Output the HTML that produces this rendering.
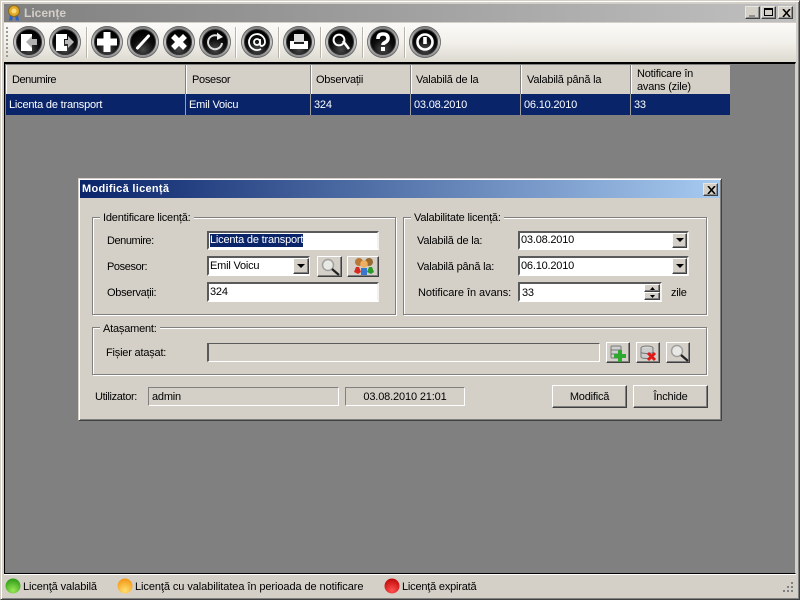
<!DOCTYPE html>
<html><head><meta charset="utf-8"><title>Licențe</title>
<style>
html,body{margin:0;padding:0;background:#d4d0c8}
#r{position:relative;width:800px;height:600px;overflow:hidden;background:#d4d0c8;font:11px/13px "Liberation Sans","DejaVu Sans",sans-serif;color:#000;letter-spacing:-.2px}
#r div,#r svg,#r span.t{position:absolute}
.t{white-space:nowrap}
.in{box-sizing:border-box;background:#fff;border:2px solid;border-color:#5a5a5a #f4f2ee #fff #5a5a5a;padding:1px 0 0 1px;white-space:nowrap}
.ro{box-sizing:border-box;border:1px solid;border-color:#808080 #fff #fff #808080;white-space:nowrap}
.btn{box-sizing:border-box;background:#d4d0c8;border:1px solid;border-color:#fff #404040 #404040 #fff;box-shadow:inset -1px -1px 0 #808080}
.grp{box-sizing:border-box;border:1px solid #808080;box-shadow:1px 1px 0 #fff,inset 1px 1px 0 #fff}
.lg{background:#d4d0c8;padding:0 3px;white-space:nowrap;height:13px}
.hd{box-sizing:border-box;top:65px;height:29px;background:#d4d0c8;border-right:1px solid #808080;box-shadow:inset 1px 0 0 #fff}
.cl{box-sizing:border-box;top:94px;height:21px;background:#0a246a;color:#fff;border-right:1px solid #a0a0a0;padding:5px 0 0 3px;white-space:nowrap}
.sep{top:27px;width:2px;height:31px;background:linear-gradient(90deg,#b8b4ac 50%,#fff 50%)}
.cap{box-sizing:border-box;background:#d4d0c8;border:1px solid;border-color:#e8e6e0 #404040 #404040 #e8e6e0;width:15px;height:13px;top:6px;box-shadow:inset -1px -1px 0 #909090}
</style></head><body><div id="r">
<!-- window frame -->
<div style="left:0;top:0;width:800px;height:600px;box-sizing:border-box;border:1px solid #d4d0c8;border-right-color:#404040;border-bottom-color:#404040;box-shadow:inset 1px 1px 0 #fff,inset -1px -1px 0 #808080"></div>
<div style="left:4px;top:4px;width:792px;height:18px;background:linear-gradient(90deg,#808080,#c0c0c0)"></div>
<svg style="left:7px;top:5px" width="14" height="17" viewBox="0 0 14 17"><path d="M3 10l-1 6 2-1 1 1 1-5zM8 10l1 6 1-1 2 1-1-6z" fill="#2a62c8"/><circle cx="7" cy="6" r="5.5" fill="#e2a82a" stroke="#8a6a18"/><circle cx="7" cy="6" r="2.5" fill="#f6dc7a"/></svg>
<span class="t" style="left:24px;top:7px;font-weight:bold;color:#d4d0c8;font-size:12px;letter-spacing:0">Licențe</span>
<div class="cap" style="left:745px"><div style="left:3px;top:8px;width:6px;height:2px;background:#909090"></div></div>
<div class="cap" style="left:761px"><div style="left:2px;top:1px;width:9px;height:8px;box-sizing:border-box;border:1px solid #000;border-top-width:2px"></div></div>
<div class="cap" style="left:778px"><svg style="left:3px;top:2px" width="9" height="8" viewBox="0 0 9 8"><path d="M1 0l7 8M8 0L1 8" stroke="#000" stroke-width="1.6"/></svg></div>
<!-- toolbar -->
<div style="left:4px;top:23px;width:792px;height:39px;background:linear-gradient(180deg,#fbfaf8,#f2f0ea 50%,#dcd9d0)"></div>
<svg style="left:6px;top:26px" width="3" height="34"><g fill="#9a9a94"><rect y="1" width="2" height="2"/><rect y="5" width="2" height="2"/><rect y="9" width="2" height="2"/><rect y="13" width="2" height="2"/><rect y="17" width="2" height="2"/><rect y="21" width="2" height="2"/><rect y="25" width="2" height="2"/><rect y="29" width="2" height="2"/></g></svg>
<div class="sep" style="left:86px"></div><div class="sep" style="left:235px"></div><div class="sep" style="left:278px"></div><div class="sep" style="left:320px"></div><div class="sep" style="left:362px"></div><div class="sep" style="left:404px"></div>
<svg style="left:0;top:0" width="450" height="62" viewBox="0 0 450 62">
<defs>
<linearGradient id="ring" x1="0" y1="0" x2="0" y2="1"><stop offset="0" stop-color="#777"/><stop offset=".5" stop-color="#c4c4c4"/><stop offset="1" stop-color="#8a8a8a"/></linearGradient>
<radialGradient id="blk" cx=".5" cy=".8" r=".7"><stop offset="0" stop-color="#4a4a4a"/><stop offset=".6" stop-color="#0c0c0c"/><stop offset="1" stop-color="#000"/></radialGradient>
<g id="b"><circle r="16" fill="url(#ring)"/><circle r="15.500" fill="none" stroke="#666" stroke-width=".8"/><circle r="12.500" fill="url(#blk)" stroke="#333"/></g>
</defs>
<g transform="translate(29,42)"><use href="#b"/><path d="M-8-8H3V-4L-2 0 3 4V9H-8z" fill="#fff"/><path d="M-3 0L3-6V-3H8V3H3V6z" fill="#b0b0b0"/></g>
<g transform="translate(65,42)"><use href="#b"/><path d="M-9-8H2V-3H-1V4H2V9H-9z" fill="#fff"/><path d="M0-2H3V-6L9 0 3 6V2H0z" fill="#b8b8b8"/></g>
<g transform="translate(107,42)"><use href="#b"/><path d="M-3.500-10H3.500V-3.500H10V3.500H3.500V10H-3.500V3.500H-10V-3.500H-3.500z" fill="#fff"/></g>
<g transform="translate(143,42)"><use href="#b"/><path d="M-5.500 6L5.500-6" stroke="#fff" stroke-width="3" stroke-linecap="round"/></g>
<g transform="translate(179,42)"><use href="#b"/><path d="M-6-6L6 6M6-6L-6 6" stroke="#fff" stroke-width="5.500"/></g>
<g transform="translate(215,42)"><use href="#b"/><path d="M7 1A7 7 0 1 1 2-6.500" fill="none" stroke="#ddd" stroke-width="2"/><path d="M2-9.500L8-5 2-2z" fill="#eee"/></g>
<g transform="translate(257,42)"><use href="#b"/><circle cx="0" cy="0" r="3" fill="none" stroke="#fff" stroke-width="1.800"/><path d="M3-3V2Q3 4 5 4 8 3 8 0A8 8 0 1 0 4 7" fill="none" stroke="#fff" stroke-width="1.800"/></g>
<g transform="translate(299,42)"><use href="#b"/><path d="M-5-8H5V0H-5z" fill="#ddd"/><path d="M-9-1H-5V2H5V-1H9V7H-9z" fill="#fff"/></g>
<g transform="translate(341,42)"><use href="#b"/><circle cx="-2" cy="-2" r="5.400" fill="none" stroke="#fff" stroke-width="2"/><path d="M2-1L8 7" stroke="#fff" stroke-width="2.600"/></g>
<g transform="translate(383,42)"><use href="#b"/><path d="M-5-3Q-5-8 0-8 5-8 5-3.500 5-1 2 0.500 0 1.500 0 3" fill="none" stroke="#fff" stroke-width="3.600"/><rect x="-2" y="5" width="4" height="4" fill="#fff"/></g>
<g transform="translate(425,42)"><use href="#b"/><circle r="7.500" fill="none" stroke="#fff" stroke-width="2.600"/><rect x="-1.800" y="-5" width="3.600" height="7" fill="#fff"/></g>
</svg>
<!-- MDI area -->
<div style="left:4px;top:62px;width:792px;height:512px;box-sizing:border-box;background:#808080;border:2px solid #000;border-right:1px solid #d4d0c8;border-left-width:1px;border-bottom-width:1px"></div>
<!-- table -->
<div class="hd" style="left:6px;width:180px"><span class="t" style="left:6px;top:9px;letter-spacing:-.45px">Denumire</span></div>
<div class="hd" style="left:186px;width:125px"><span class="t" style="left:6px;top:9px;letter-spacing:-.3px">Posesor</span></div>
<div class="hd" style="left:311px;width:100px"><span class="t" style="left:5px;top:9px;letter-spacing:-.25px">Observații</span></div>
<div class="hd" style="left:411px;width:110px"><span class="t" style="left:5px;top:9px">Valabilă de la</span></div>
<div class="hd" style="left:521px;width:110px"><span class="t" style="left:6px;top:9px">Valabilă până la</span></div>
<div class="hd" style="left:631px;width:99px;border-right:0"><span class="t" style="left:6px;top:3px">Notificare în<br>avans (zile)</span></div>
<div class="cl" style="left:6px;width:180px">Licenta de transport</div>
<div class="cl" style="left:186px;width:125px">Emil Voicu</div>
<div class="cl" style="left:311px;width:100px">324</div>
<div class="cl" style="left:411px;width:110px">03.08.2010</div>
<div class="cl" style="left:521px;width:110px">06.10.2010</div>
<div class="cl" style="left:631px;width:99px;border-right:0">33</div>
<!-- dialog -->
<div style="left:78px;top:178px;width:644px;height:243px;box-sizing:border-box;background:#d4d0c8;border:1px solid;border-color:#d4d0c8 #404040 #404040 #d4d0c8;box-shadow:inset 1px 1px 0 #fff,inset -1px -1px 0 #808080"></div>
<div style="left:80px;top:180px;width:640px;height:18px;background:linear-gradient(90deg,#0a246a,#a6caf0)"></div>
<span class="t" style="left:82px;top:183px;font-weight:bold;color:#fff;letter-spacing:.3px">Modifică licență</span>
<div class="cap" style="left:703px;top:183px"><svg style="left:3px;top:2px" width="9" height="8" viewBox="0 0 9 8"><path d="M1 0l7 8M8 0L1 8" stroke="#000" stroke-width="1.600"/></svg></div>
<!-- group 1 -->
<div class="grp" style="left:92px;top:217px;width:304px;height:98px"></div>
<span class="t lg" style="left:100px;top:212px">Identificare licență:</span>
<span class="t" style="left:107px;top:235px;letter-spacing:-.45px">Denumire:</span>
<span class="t" style="left:107px;top:261px;letter-spacing:-.4px">Posesor:</span>
<span class="t" style="left:107px;top:287px;letter-spacing:-.3px">Observații:</span>
<div class="in" style="left:207px;top:231px;width:172px;height:19px"><span style="background:#0a246a;color:#fff;display:inline-block;line-height:13px">Licenta de transport</span></div>
<div class="in" style="left:207px;top:256px;width:103px;height:20px;padding-top:2px">Emil Voicu</div>
<div class="btn" style="left:293px;top:258px;width:16px;height:16px"><svg style="left:3px;top:5px" width="8" height="4"><path d="M0 0h8L4 4z"/></svg></div>
<div class="btn" style="left:317px;top:256px;width:25px;height:21px"><svg style="left:3px;top:1px" width="19" height="18" viewBox="0 0 19 18"><circle cx="7" cy="7" r="5.500" fill="#e8e8e4" stroke="#a0a0a0" stroke-width="1.500"/><path d="M11 11l7 6" stroke="#222" stroke-width="2.200"/></svg></div>
<div class="btn" style="left:347px;top:256px;width:32px;height:21px"><svg style="left:5px;top:0" width="22" height="19" viewBox="0 0 22 19"><circle cx="6" cy="5" r="4" fill="#b87838"/><circle cx="16" cy="5" r="4" fill="#9a6a30"/><circle cx="11" cy="7" r="3.800" fill="#eeb060"/><path d="M1 15l2-5h3l2 5-3 2z" fill="#d82820"/><path d="M14 15l2-5h3l2 5-3 2z" fill="#2a9a2a"/><path d="M8 11h6v7H8z" fill="#3a78d0"/></svg></div>
<div class="in" style="left:207px;top:282px;width:172px;height:20px;padding-top:2px">324</div>
<!-- group 2 -->
<div class="grp" style="left:403px;top:217px;width:304px;height:98px"></div>
<span class="t lg" style="left:411px;top:212px">Valabilitate licență:</span>
<span class="t" style="left:417px;top:235px">Valabilă de la:</span>
<span class="t" style="left:417px;top:261px">Valabilă până la:</span>
<span class="t" style="left:418px;top:287px;letter-spacing:-.05px">Notificare în avans:</span>
<div class="in" style="left:518px;top:231px;width:171px;height:19px;padding-top:1px">03.08.2010</div>
<div class="btn" style="left:672px;top:233px;width:15px;height:15px"><svg style="left:3px;top:4px" width="8" height="4"><path d="M0 0h8L4 4z"/></svg></div>
<div class="in" style="left:518px;top:256px;width:171px;height:20px;padding-top:2px">06.10.2010</div>
<div class="btn" style="left:672px;top:258px;width:15px;height:16px"><svg style="left:3px;top:5px" width="8" height="4"><path d="M0 0h8L4 4z"/></svg></div>
<div class="in" style="left:518px;top:282px;width:144px;height:20px;padding-left:2px;padding-top:3px">33</div>
<div class="btn" style="left:644px;top:284px;width:16px;height:8px"><svg style="left:5px;top:2px" width="5" height="3"><path d="M0 3h5L2.500 0z"/></svg></div>
<div class="btn" style="left:644px;top:292px;width:16px;height:8px"><svg style="left:5px;top:2px" width="5" height="3"><path d="M0 0h5L2.500 3z"/></svg></div>
<span class="t" style="left:671px;top:287px">zile</span>
<!-- group 3 -->
<div class="grp" style="left:92px;top:327px;width:615px;height:48px"></div>
<span class="t lg" style="left:100px;top:323px">Atașament:</span>
<span class="t" style="left:106px;top:347px">Fișier atașat:</span>
<div class="in" style="left:207px;top:343px;width:393px;height:19px;background:#d4d0c8;border-color:#5a5a5a #fff #fff #5a5a5a;border-width:1px 1px 1px 2px"></div>
<div class="btn" style="left:606px;top:342px;width:24px;height:21px"><svg style="left:3px;top:2px" width="18" height="17" viewBox="0 0 18 17"><rect x="1" y="1" width="10" height="12" rx="1" fill="#cfcfcf" stroke="#777"/><path d="M1 5h10M1 9h10" stroke="#777"/><path d="M8 5h4v4h4v4h-4v4H8v-4H4V9h4z" fill="#2ea82e"/></svg></div>
<div class="btn" style="left:636px;top:342px;width:24px;height:21px"><svg style="left:3px;top:2px" width="18" height="17" viewBox="0 0 18 17"><ellipse cx="7" cy="3" rx="6" ry="2" fill="#d8d8d8" stroke="#777"/><path d="M1 3v9c0 2 12 2 12 0V3M1 7c0 2 12 2 12 0" fill="#ccc" stroke="#777"/><path d="M8 8l7 7M15 8l-7 7" stroke="#e01818" stroke-width="3"/></svg></div>
<div class="btn" style="left:666px;top:342px;width:24px;height:21px"><svg style="left:3px;top:1px" width="19" height="18" viewBox="0 0 19 18"><circle cx="7" cy="7" r="5.500" fill="#e8e8e4" stroke="#a0a0a0" stroke-width="1.500"/><path d="M11 11l7 6" stroke="#222" stroke-width="2.200"/></svg></div>
<!-- bottom -->
<span class="t" style="left:95px;top:391px;letter-spacing:-.35px">Utilizator:</span>
<div class="ro" style="left:148px;top:387px;width:191px;height:19px;padding:3px 0 0 3px">admin</div>
<div class="ro" style="left:345px;top:387px;width:120px;height:19px;padding-top:3px;text-align:center;letter-spacing:-.15px">03.08.2010 21:01</div>
<div class="btn" style="left:552px;top:385px;width:75px;height:23px;text-align:center;line-height:23px">Modifică</div>
<div class="btn" style="left:633px;top:385px;width:75px;height:23px;text-align:center;line-height:23px">Închide</div>
<!-- status bar -->
<div style="left:4px;top:574px;width:792px;height:1px;background:#fff"></div>
<svg style="left:0;top:576px" width="410" height="20" viewBox="0 0 410 20">
<defs>
<radialGradient id="g" cx=".5" cy=".8" r=".8"><stop offset="0" stop-color="#9ce858"/><stop offset="1" stop-color="#2a9a14"/></radialGradient>
<radialGradient id="o" cx=".5" cy=".8" r=".8"><stop offset="0" stop-color="#ffe070"/><stop offset="1" stop-color="#f49412"/></radialGradient>
<radialGradient id="d" cx=".5" cy=".8" r=".8"><stop offset="0" stop-color="#ff5050"/><stop offset="1" stop-color="#c00808"/></radialGradient>
</defs>
<circle cx="13" cy="10" r="7.500" fill="url(#g)"/><circle cx="125" cy="10" r="7.500" fill="url(#o)"/><circle cx="392" cy="10" r="7.500" fill="url(#d)"/>
</svg>
<span class="t" style="left:23px;top:581px;letter-spacing:-.12px">Licenţă valabilă</span>
<span class="t" style="left:135px;top:581px;letter-spacing:-.08px">Licenţă cu valabilitatea în perioada de notificare</span>
<span class="t" style="left:402px;top:581px">Licenţă expirată</span>
<svg style="left:782px;top:581px" width="12" height="12"><g fill="#808080"><rect x="9" y="1" width="2" height="2"/><rect x="5" y="5" width="2" height="2"/><rect x="9" y="5" width="2" height="2"/><rect x="1" y="9" width="2" height="2"/><rect x="5" y="9" width="2" height="2"/><rect x="9" y="9" width="2" height="2"/></g></svg>
</div></body></html>
